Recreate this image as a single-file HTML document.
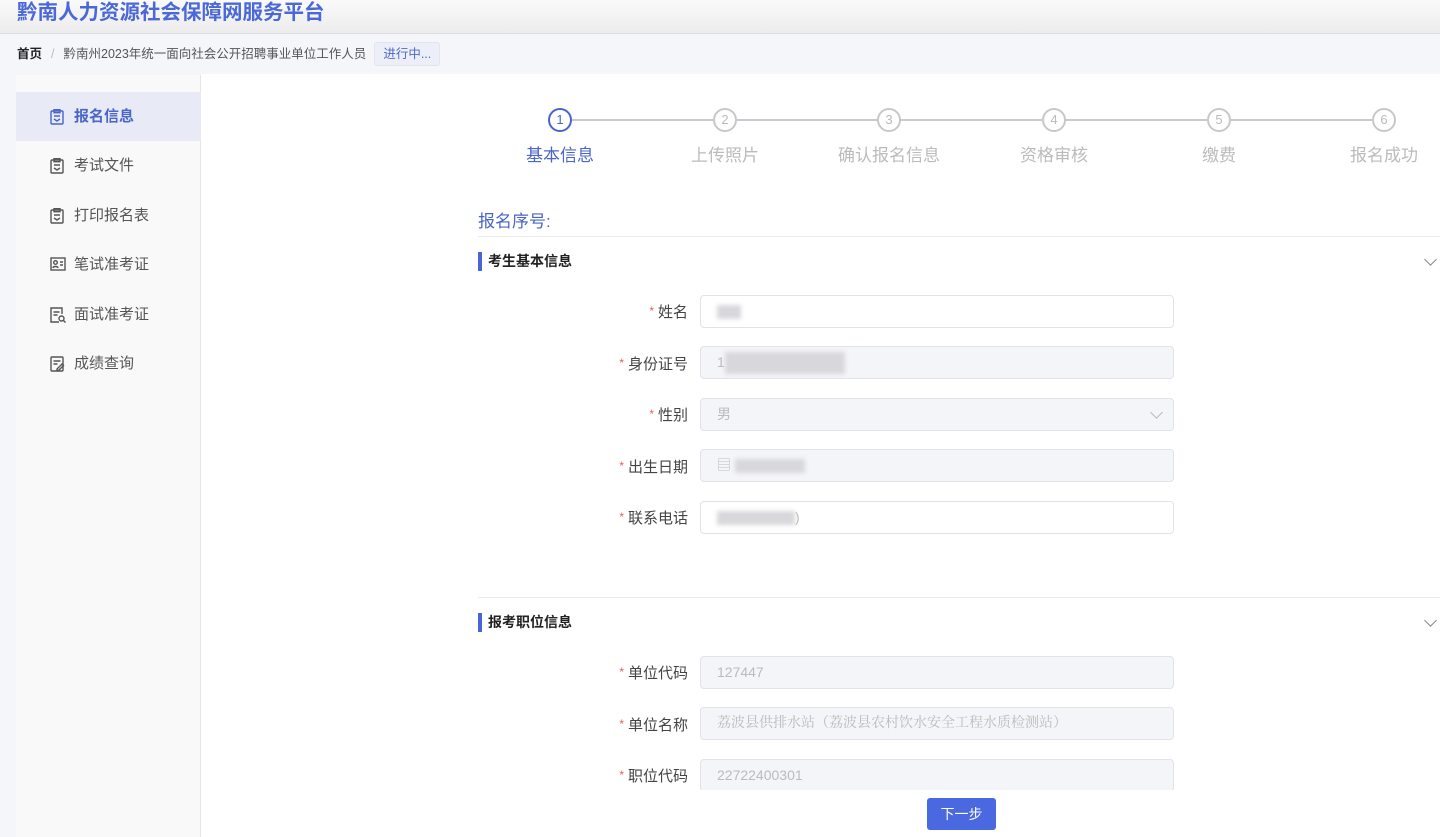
<!DOCTYPE html>
<html><head><meta charset="utf-8"><style>
*{margin:0;padding:0;box-sizing:border-box}
body{width:1440px;height:837px;overflow:hidden;font-family:"Liberation Sans","Noto Sans CJK SC",sans-serif;background:#f5f6fa;position:relative;color:#333}
.hdr{position:absolute;left:0;top:0;width:1440px;height:34px;background:linear-gradient(#fafafa,#ececec);border-bottom:1px solid #dcdde2}
.hdr span{position:absolute;left:17px;top:0;font-size:20.5px;font-weight:bold;color:#4a68d8;line-height:26px}
.bc{position:absolute;left:17px;top:42px;font-size:12.5px;line-height:24px;color:#555}
.bc b{color:#222}
.bc .sep{color:#bbb;margin:0 9px}
.tag{display:inline-block;margin-left:8px;padding:0 8px;background:#eceff8;border:1px solid #e1e5f2;color:#5068c8;border-radius:3px;font-size:12.5px;line-height:22px}
.side{position:absolute;left:16px;top:75px;width:185px;height:762px;background:#f9f9f9;border-right:1px solid #e6e6e6}
.it{position:absolute;left:0;width:185px;height:49px;font-size:15px;color:#555;line-height:49px;padding-left:58px}
.it.on{background:#e8ebf5;color:#4a64c8;font-weight:bold}
.it svg{position:absolute;left:34px;top:17px}
.main{position:absolute;left:201px;top:74px;width:1239px;height:763px;background:#fff}
.st{position:absolute;top:108px;width:24px;height:24px;border:2px solid #c8c8c8;border-radius:50%;text-align:center;font-size:13px;line-height:20px;color:#bbb;background:#fff}
.st.on{border-color:#4a64c8;color:#4a64c8}
.sl{position:absolute;top:141px;width:140px;text-align:center;font-size:17px;color:#bbb}
.sl.on{color:#4a64c8}
.ln{position:absolute;top:119px;height:2px;background:#c9cad0}
.sec{position:absolute;left:478px;font-size:14px;font-weight:bold;color:#222;border-left:4px solid #4a64d8;padding-left:6px;line-height:19px}
.hr{position:absolute;left:478px;width:962px;height:1px;background:#ebebeb}
.lab{position:absolute;width:200px;left:488px;text-align:right;font-size:15px;color:#444}
.lab i{color:#e06060;font-style:normal;font-size:12px;margin-right:4px;vertical-align:2px}
.inp{position:absolute;left:700px;width:474px;height:33px;border:1px solid #e2e3e8;border-radius:4px;background:#f4f5f9;font-size:14px;color:#bbb;line-height:31px;padding-left:16px}
.inp.w{background:#fff}
.blur{display:inline-block;height:14px;background:#d8d8dc;vertical-align:middle;filter:blur(2px)}
.chev{position:absolute;width:9px;height:9px;border-right:1px solid #888;border-bottom:1px solid #888;transform:rotate(45deg)}
.btn{position:absolute;left:927px;top:798px;width:69px;height:32px;background:#4a68e0;border-radius:3px;color:#fff;font-size:14px;text-align:center;line-height:32px}
</style></head><body>
<div class="hdr"><span>黔南人力资源社会保障网服务平台</span></div>
<div class="bc"><b>首页</b><span class="sep">/</span>黔南州2023年统一面向社会公开招聘事业单位工作人员<span class="tag">进行中...</span></div>
<div class="side">
<div class="it on" style="top:17px"><svg width="14" height="16" viewBox="0 0 14 16" fill="none" stroke="#4a64c8" stroke-width="1.4"><rect x="1" y="2" width="12" height="13" rx="1"/><rect x="4" y="0.7" width="6" height="3"/><path d="M4 7h6M4 10l3 2 3-2"/></svg>报名信息</div>
<div class="it" style="top:66px"><svg width="14" height="16" viewBox="0 0 14 16" fill="none" stroke="#555" stroke-width="1.4"><rect x="1" y="2" width="12" height="13" rx="1"/><rect x="4" y="0.7" width="6" height="3"/><path d="M4 7h6M4 10l3 2 3-2"/></svg>考试文件</div>
<div class="it" style="top:116px"><svg width="14" height="16" viewBox="0 0 14 16" fill="none" stroke="#555" stroke-width="1.4"><rect x="1" y="2" width="12" height="13" rx="1"/><rect x="4" y="0.7" width="6" height="3"/><path d="M4 7h6M4 10l3 2 3-2"/></svg>打印报名表</div>
<div class="it" style="top:165px"><svg width="16" height="14" viewBox="0 0 16 14" fill="none" stroke="#555" stroke-width="1.4"><rect x="1" y="1" width="14" height="12"/><circle cx="5.5" cy="5.5" r="1.8"/><path d="M3 11c0-2 5-2 5 0M10 5h3M10 8h3"/></svg>笔试准考证</div>
<div class="it" style="top:215px"><svg width="16" height="16" viewBox="0 0 16 16" fill="none" stroke="#555" stroke-width="1.4"><path d="M9 15H1V1h11v6"/><path d="M3.5 5h6M3.5 8h4"/><circle cx="11.5" cy="11.5" r="2.5"/><path d="M13.5 13.5l2 2"/></svg>面试准考证</div>
<div class="it" style="top:264px"><svg width="15" height="16" viewBox="0 0 15 16" fill="none" stroke="#555" stroke-width="1.4"><rect x="1" y="1" width="12" height="14" rx="1"/><path d="M3.5 5h7M3.5 8h4M7 13l5-5 1.5 1.5-5 5H7z"/></svg>成绩查询</div>
</div>
<div class="main"></div>
<div class="ln" style="left:572px;width:141px;"></div>
<div class="ln" style="left:737px;width:140px"></div>
<div class="ln" style="left:901px;width:141px"></div>
<div class="ln" style="left:1066px;width:141px"></div>
<div class="ln" style="left:1231px;width:141px"></div>
<div class="st on" style="left:548px">1</div><div class="sl on" style="left:490px">基本信息</div>
<div class="st" style="left:713px">2</div><div class="sl" style="left:655px">上传照片</div>
<div class="st" style="left:877px">3</div><div class="sl" style="left:819px">确认报名信息</div>
<div class="st" style="left:1042px">4</div><div class="sl" style="left:984px">资格审核</div>
<div class="st" style="left:1207px">5</div><div class="sl" style="left:1149px">缴费</div>
<div class="st" style="left:1372px">6</div><div class="sl" style="left:1314px">报名成功</div>
<div style="position:absolute;left:478px;top:207px;font-size:17px;color:#4a64c8">报名序号:</div>
<div class="hr" style="top:236px"></div>
<div class="sec" style="top:252px">考生基本信息</div>
<div class="chev" style="left:1426px;top:255px"></div>
<div class="lab" style="top:301px"><i>*</i>姓名</div><div class="inp w" style="top:295px"><span class="blur" style="width:24px"></span></div>
<div class="lab" style="top:353px"><i>*</i>身份证号</div><div class="inp" style="top:346px">1<span class="blur" style="width:120px;height:22px"></span></div>
<div class="lab" style="top:404px"><i>*</i>性别</div><div class="inp" style="top:398px">男<div class="chev" style="left:451px;top:9px;border-color:#bbb"></div></div>
<div class="lab" style="top:456px"><i>*</i>出生日期</div><div class="inp" style="top:449px">▤ <span class="blur" style="width:70px"></span></div>
<div class="lab" style="top:507px"><i>*</i>联系电话</div><div class="inp w" style="top:501px"><span class="blur" style="width:78px"></span>)</div>
<div class="hr" style="top:597px"></div>
<div class="sec" style="top:613px">报考职位信息</div>
<div class="chev" style="left:1426px;top:616px"></div>
<div class="lab" style="top:662px"><i>*</i>单位代码</div><div class="inp" style="top:656px">127447</div>
<div class="lab" style="top:714px"><i>*</i>单位名称</div><div class="inp" style="top:707px;font-family:'Liberation Serif','Noto Serif CJK SC',serif">荔波县供排水站（荔波县农村饮水安全工程水质检测站）</div>
<div style="position:absolute;left:488px;top:750px;width:952px;height:40px;overflow:hidden">
<div class="lab" style="left:0;top:15px"><i>*</i>职位代码</div><div class="inp" style="left:212px;top:9px">22722400301</div></div>
<div class="btn">下一步</div>
</body></html>
